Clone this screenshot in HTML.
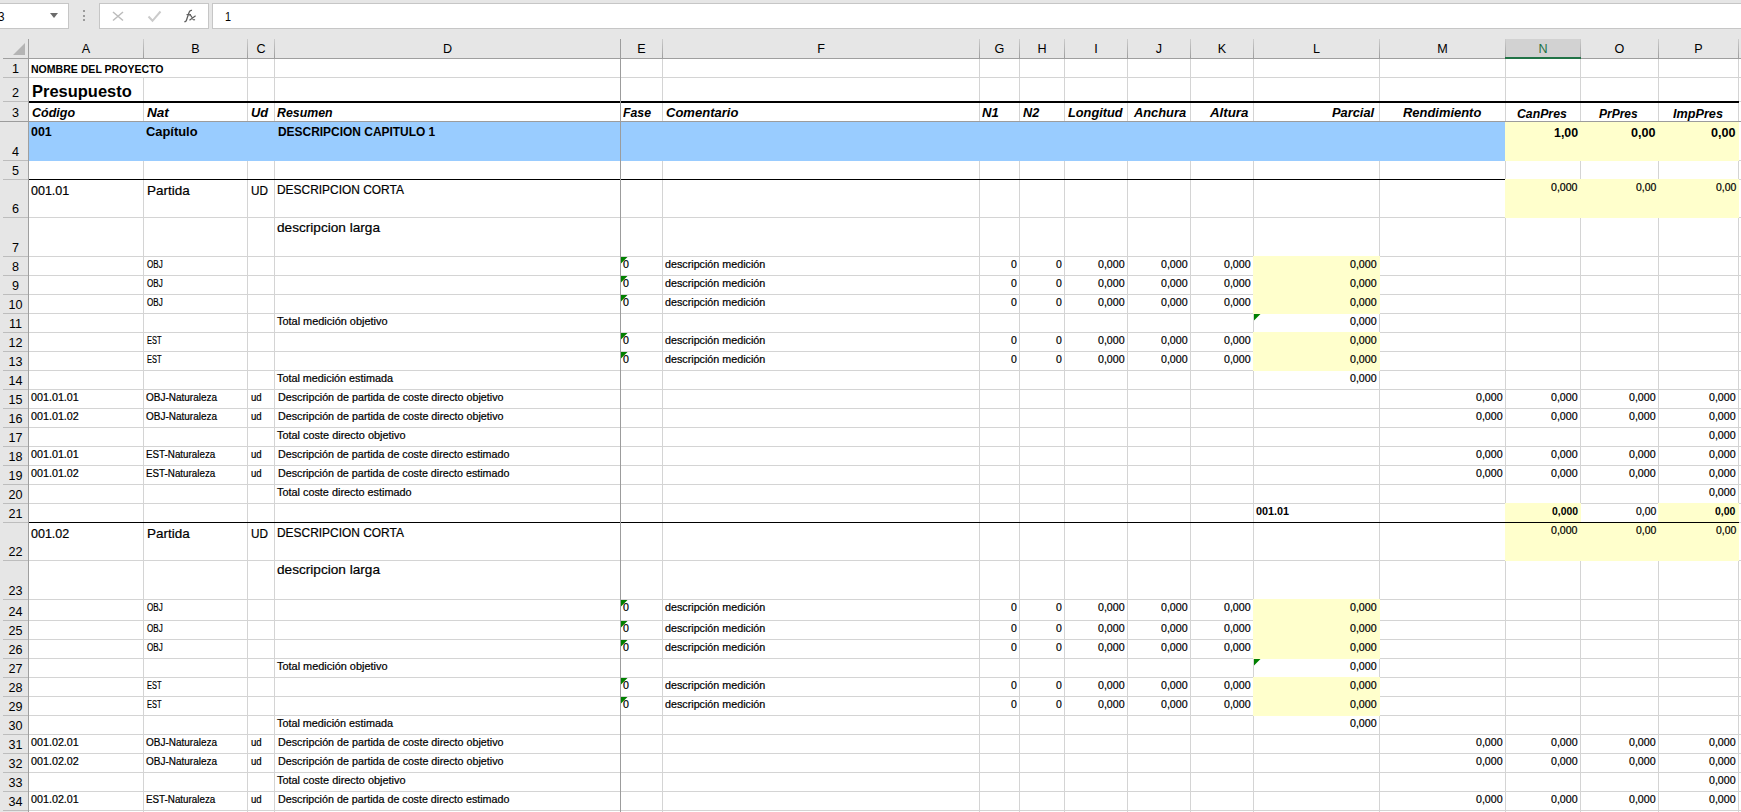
<!DOCTYPE html><html><head><meta charset="utf-8"><style>
html,body{margin:0;padding:0}
body{width:1741px;height:812px;overflow:hidden;position:relative;background:#fff;font-family:"Liberation Sans",sans-serif}
body>div,body>svg{position:absolute}
.t{white-space:nowrap;transform-origin:0 0}
.rg{-webkit-text-stroke:0.2px #000}
</style></head><body>
<div style="left:143px;top:59px;width:1px;height:753px;background:#d4d4d4;"></div>
<div style="left:247px;top:59px;width:1px;height:753px;background:#d4d4d4;"></div>
<div style="left:274px;top:59px;width:1px;height:753px;background:#d4d4d4;"></div>
<div style="left:620px;top:59px;width:1px;height:753px;background:#d4d4d4;"></div>
<div style="left:662px;top:59px;width:1px;height:753px;background:#d4d4d4;"></div>
<div style="left:979px;top:59px;width:1px;height:753px;background:#d4d4d4;"></div>
<div style="left:1019px;top:59px;width:1px;height:753px;background:#d4d4d4;"></div>
<div style="left:1064px;top:59px;width:1px;height:753px;background:#d4d4d4;"></div>
<div style="left:1127px;top:59px;width:1px;height:753px;background:#d4d4d4;"></div>
<div style="left:1190px;top:59px;width:1px;height:753px;background:#d4d4d4;"></div>
<div style="left:1253px;top:59px;width:1px;height:753px;background:#d4d4d4;"></div>
<div style="left:1379px;top:59px;width:1px;height:753px;background:#d4d4d4;"></div>
<div style="left:1505px;top:59px;width:1px;height:753px;background:#d4d4d4;"></div>
<div style="left:1580px;top:59px;width:1px;height:753px;background:#d4d4d4;"></div>
<div style="left:1658px;top:59px;width:1px;height:753px;background:#d4d4d4;"></div>
<div style="left:1738px;top:59px;width:1px;height:753px;background:#d4d4d4;"></div>
<div style="left:29px;top:77px;width:1712px;height:1px;background:#d4d4d4;"></div>
<div style="left:29px;top:101px;width:1712px;height:1px;background:#d4d4d4;"></div>
<div style="left:29px;top:121px;width:1712px;height:1px;background:#d4d4d4;"></div>
<div style="left:29px;top:160px;width:1712px;height:1px;background:#d4d4d4;"></div>
<div style="left:29px;top:179px;width:1712px;height:1px;background:#d4d4d4;"></div>
<div style="left:29px;top:217px;width:1712px;height:1px;background:#d4d4d4;"></div>
<div style="left:29px;top:256px;width:1712px;height:1px;background:#d4d4d4;"></div>
<div style="left:29px;top:275px;width:1712px;height:1px;background:#d4d4d4;"></div>
<div style="left:29px;top:294px;width:1712px;height:1px;background:#d4d4d4;"></div>
<div style="left:29px;top:313px;width:1712px;height:1px;background:#d4d4d4;"></div>
<div style="left:29px;top:332px;width:1712px;height:1px;background:#d4d4d4;"></div>
<div style="left:29px;top:351px;width:1712px;height:1px;background:#d4d4d4;"></div>
<div style="left:29px;top:370px;width:1712px;height:1px;background:#d4d4d4;"></div>
<div style="left:29px;top:389px;width:1712px;height:1px;background:#d4d4d4;"></div>
<div style="left:29px;top:408px;width:1712px;height:1px;background:#d4d4d4;"></div>
<div style="left:29px;top:427px;width:1712px;height:1px;background:#d4d4d4;"></div>
<div style="left:29px;top:446px;width:1712px;height:1px;background:#d4d4d4;"></div>
<div style="left:29px;top:465px;width:1712px;height:1px;background:#d4d4d4;"></div>
<div style="left:29px;top:484px;width:1712px;height:1px;background:#d4d4d4;"></div>
<div style="left:29px;top:503px;width:1712px;height:1px;background:#d4d4d4;"></div>
<div style="left:29px;top:522px;width:1712px;height:1px;background:#d4d4d4;"></div>
<div style="left:29px;top:560px;width:1712px;height:1px;background:#d4d4d4;"></div>
<div style="left:29px;top:599px;width:1712px;height:1px;background:#d4d4d4;"></div>
<div style="left:29px;top:620px;width:1712px;height:1px;background:#d4d4d4;"></div>
<div style="left:29px;top:639px;width:1712px;height:1px;background:#d4d4d4;"></div>
<div style="left:29px;top:658px;width:1712px;height:1px;background:#d4d4d4;"></div>
<div style="left:29px;top:677px;width:1712px;height:1px;background:#d4d4d4;"></div>
<div style="left:29px;top:696px;width:1712px;height:1px;background:#d4d4d4;"></div>
<div style="left:29px;top:715px;width:1712px;height:1px;background:#d4d4d4;"></div>
<div style="left:29px;top:734px;width:1712px;height:1px;background:#d4d4d4;"></div>
<div style="left:29px;top:753px;width:1712px;height:1px;background:#d4d4d4;"></div>
<div style="left:29px;top:772px;width:1712px;height:1px;background:#d4d4d4;"></div>
<div style="left:29px;top:791px;width:1712px;height:1px;background:#d4d4d4;"></div>
<div style="left:29px;top:810px;width:1712px;height:1px;background:#d4d4d4;"></div>
<div style="left:143px;top:59px;width:1px;height:18px;background:#fff;"></div>
<div style="left:29px;top:122px;width:1477px;height:39px;background:#99ccff;"></div>
<div style="left:1505px;top:122px;width:234px;height:39px;background:#ffffcc;"></div>
<div style="left:1505px;top:179px;width:234px;height:39px;background:#ffffcc;"></div>
<div style="left:1505px;top:522px;width:234px;height:39px;background:#ffffcc;"></div>
<div style="left:1253px;top:256px;width:127px;height:58px;background:#ffffcc;"></div>
<div style="left:1253px;top:332px;width:127px;height:39px;background:#ffffcc;"></div>
<div style="left:1253px;top:599px;width:127px;height:60px;background:#ffffcc;"></div>
<div style="left:1253px;top:677px;width:127px;height:39px;background:#ffffcc;"></div>
<div style="left:1505px;top:503px;width:76px;height:20px;background:#ffffcc;"></div>
<div style="left:1658px;top:503px;width:81px;height:20px;background:#ffffcc;"></div>
<div style="left:29px;top:101px;width:1710px;height:2px;background:#000;"></div>
<div style="left:29px;top:179px;width:1476px;height:1px;background:#000;"></div>
<div style="left:29px;top:522px;width:1710px;height:1px;background:#000;"></div>
<div style="left:0px;top:0px;width:1741px;height:39px;background:#e6e6e6;"></div>
<div style="left:-2px;top:3px;width:71px;height:26px;background:#fff;box-sizing:border-box;border:1px solid #c6c6c6;"></div>
<div style="left:99px;top:3px;width:110px;height:26px;background:#fff;box-sizing:border-box;border:1px solid #c6c6c6;"></div>
<div style="left:212px;top:3px;width:1531px;height:26px;background:#fff;box-sizing:border-box;border:1px solid #c6c6c6;"></div>
<div style="left:83px;top:10px;width:2px;height:2px;background:#9b9b9b;"></div>
<div style="left:83px;top:15px;width:2px;height:2px;background:#9b9b9b;"></div>
<div style="left:83px;top:19px;width:2px;height:2px;background:#9b9b9b;"></div>
<svg style="left:50px;top:13px" width="8" height="5"><path d="M0 0H8L4 5Z" fill="#6b6b6b"/></svg>
<svg style="left:105px;top:5px" width="100" height="22" viewBox="105 5 100 22"><path d="M113 12L123 20.5M123 12L113 20.5" stroke="#bcbcbc" stroke-width="1.5" fill="none"/><path d="M148.5 16.5L152.5 20.8L160.5 11.5" stroke="#cbcbcb" stroke-width="2" fill="none"/><path d="M184.3 21.6C185.5 22 186.3 21 186.7 19.5L189 12.5C189.5 10.8 190.5 10 192 10.4" stroke="#5f5f5f" stroke-width="1.3" fill="none"/><path d="M186.5 14.6H191" stroke="#5f5f5f" stroke-width="1.1"/><path d="M189.5 15.8C190.5 15.3 191.3 15.6 191.8 17L193 19.3C193.4 20 194.2 20.1 195 19.6M195.6 15.8L189.5 20.2" stroke="#5f5f5f" stroke-width="1.2" fill="none"/></svg>
<div style="left:0px;top:39px;width:1741px;height:20px;background:#e6e6e6;"></div>
<div style="left:3px;top:58px;width:1738px;height:1px;background:#9f9f9f;"></div>
<div style="left:1505px;top:39px;width:76px;height:18px;background:#d2d2d2;"></div>
<div style="left:143px;top:39px;width:1px;height:19px;background:#b1b1b1;background:linear-gradient(#cccccc,#9e9e9e);"></div>
<div style="left:247px;top:39px;width:1px;height:19px;background:#b1b1b1;background:linear-gradient(#cccccc,#9e9e9e);"></div>
<div style="left:274px;top:39px;width:1px;height:19px;background:#b1b1b1;background:linear-gradient(#cccccc,#9e9e9e);"></div>
<div style="left:662px;top:39px;width:1px;height:19px;background:#b1b1b1;background:linear-gradient(#cccccc,#9e9e9e);"></div>
<div style="left:979px;top:39px;width:1px;height:19px;background:#b1b1b1;background:linear-gradient(#cccccc,#9e9e9e);"></div>
<div style="left:1019px;top:39px;width:1px;height:19px;background:#b1b1b1;background:linear-gradient(#cccccc,#9e9e9e);"></div>
<div style="left:1064px;top:39px;width:1px;height:19px;background:#b1b1b1;background:linear-gradient(#cccccc,#9e9e9e);"></div>
<div style="left:1127px;top:39px;width:1px;height:19px;background:#b1b1b1;background:linear-gradient(#cccccc,#9e9e9e);"></div>
<div style="left:1190px;top:39px;width:1px;height:19px;background:#b1b1b1;background:linear-gradient(#cccccc,#9e9e9e);"></div>
<div style="left:1253px;top:39px;width:1px;height:19px;background:#b1b1b1;background:linear-gradient(#cccccc,#9e9e9e);"></div>
<div style="left:1379px;top:39px;width:1px;height:19px;background:#b1b1b1;background:linear-gradient(#cccccc,#9e9e9e);"></div>
<div style="left:1505px;top:39px;width:1px;height:19px;background:#b1b1b1;background:linear-gradient(#cccccc,#9e9e9e);"></div>
<div style="left:1580px;top:39px;width:1px;height:19px;background:#b1b1b1;background:linear-gradient(#cccccc,#9e9e9e);"></div>
<div style="left:1658px;top:39px;width:1px;height:19px;background:#b1b1b1;background:linear-gradient(#cccccc,#9e9e9e);"></div>
<div style="left:1738px;top:39px;width:1px;height:19px;background:#b1b1b1;background:linear-gradient(#cccccc,#9e9e9e);"></div>
<div style="left:1505px;top:57px;width:76px;height:2px;background:#217346;"></div>
<svg style="left:13px;top:43px" width="12" height="12"><path d="M0 12L12 0V12Z" fill="#b4b4b4"/></svg>
<div style="left:0px;top:59px;width:28px;height:753px;background:#e6e6e6;"></div>
<div style="left:28px;top:39px;width:1px;height:773px;background:#9f9f9f;"></div>
<div style="left:3px;top:77px;width:25px;height:1px;background:#bdbdbd;"></div>
<div style="left:3px;top:101px;width:25px;height:1px;background:#bdbdbd;"></div>
<div style="left:3px;top:160px;width:25px;height:1px;background:#bdbdbd;"></div>
<div style="left:3px;top:179px;width:25px;height:1px;background:#bdbdbd;"></div>
<div style="left:3px;top:217px;width:25px;height:1px;background:#bdbdbd;"></div>
<div style="left:3px;top:256px;width:25px;height:1px;background:#bdbdbd;"></div>
<div style="left:3px;top:275px;width:25px;height:1px;background:#bdbdbd;"></div>
<div style="left:3px;top:294px;width:25px;height:1px;background:#bdbdbd;"></div>
<div style="left:3px;top:313px;width:25px;height:1px;background:#bdbdbd;"></div>
<div style="left:3px;top:332px;width:25px;height:1px;background:#bdbdbd;"></div>
<div style="left:3px;top:351px;width:25px;height:1px;background:#bdbdbd;"></div>
<div style="left:3px;top:370px;width:25px;height:1px;background:#bdbdbd;"></div>
<div style="left:3px;top:389px;width:25px;height:1px;background:#bdbdbd;"></div>
<div style="left:3px;top:408px;width:25px;height:1px;background:#bdbdbd;"></div>
<div style="left:3px;top:427px;width:25px;height:1px;background:#bdbdbd;"></div>
<div style="left:3px;top:446px;width:25px;height:1px;background:#bdbdbd;"></div>
<div style="left:3px;top:465px;width:25px;height:1px;background:#bdbdbd;"></div>
<div style="left:3px;top:484px;width:25px;height:1px;background:#bdbdbd;"></div>
<div style="left:3px;top:503px;width:25px;height:1px;background:#bdbdbd;"></div>
<div style="left:3px;top:522px;width:25px;height:1px;background:#bdbdbd;"></div>
<div style="left:3px;top:560px;width:25px;height:1px;background:#bdbdbd;"></div>
<div style="left:3px;top:599px;width:25px;height:1px;background:#bdbdbd;"></div>
<div style="left:3px;top:620px;width:25px;height:1px;background:#bdbdbd;"></div>
<div style="left:3px;top:639px;width:25px;height:1px;background:#bdbdbd;"></div>
<div style="left:3px;top:658px;width:25px;height:1px;background:#bdbdbd;"></div>
<div style="left:3px;top:677px;width:25px;height:1px;background:#bdbdbd;"></div>
<div style="left:3px;top:696px;width:25px;height:1px;background:#bdbdbd;"></div>
<div style="left:3px;top:715px;width:25px;height:1px;background:#bdbdbd;"></div>
<div style="left:3px;top:734px;width:25px;height:1px;background:#bdbdbd;"></div>
<div style="left:3px;top:753px;width:25px;height:1px;background:#bdbdbd;"></div>
<div style="left:3px;top:772px;width:25px;height:1px;background:#bdbdbd;"></div>
<div style="left:3px;top:791px;width:25px;height:1px;background:#bdbdbd;"></div>
<div style="left:3px;top:810px;width:25px;height:1px;background:#bdbdbd;"></div>
<div style="left:0px;top:121px;width:1741px;height:1px;background:#9c9c9c;"></div>
<div style="left:620px;top:39px;width:1px;height:773px;background:#9c9c9c;"></div>
<div class="t" style="left:30.90px;top:63.00px;font-size:10.9px;line-height:13px;font-weight:bold;font-style:normal;color:#000;transform:scaleX(0.9674)">NOMBRE DEL PROYECTO</div>
<div class="t" style="left:31.80px;top:82.00px;font-size:15.9px;line-height:19px;font-weight:bold;font-style:normal;color:#000;transform:scaleX(1.0366)">Presupuesto</div>
<div class="t" style="left:31.70px;top:106.00px;font-size:12.0px;line-height:14px;font-weight:bold;font-style:italic;color:#000;transform:scaleX(1.0426)">Código</div>
<div class="t" style="left:146.50px;top:106.00px;font-size:12.0px;line-height:14px;font-weight:bold;font-style:italic;color:#000;transform:scaleX(1.1313)">Nat</div>
<div class="t" style="left:250.60px;top:106.00px;font-size:12.0px;line-height:14px;font-weight:bold;font-style:italic;color:#000;transform:scaleX(1.0741)">Ud</div>
<div class="t" style="left:277.20px;top:106.00px;font-size:12.0px;line-height:14px;font-weight:bold;font-style:italic;color:#000;transform:scaleX(1.0296)">Resumen</div>
<div class="t" style="left:623.00px;top:106.00px;font-size:12.0px;line-height:14px;font-weight:bold;font-style:italic;color:#000;transform:scaleX(1.0234)">Fase</div>
<div class="t" style="left:665.50px;top:106.00px;font-size:12.0px;line-height:14px;font-weight:bold;font-style:italic;color:#000;transform:scaleX(1.0861)">Comentario</div>
<div class="t" style="left:982.40px;top:106.00px;font-size:12.0px;line-height:14px;font-weight:bold;font-style:italic;color:#000;transform:scaleX(1.0938)">N1</div>
<div class="t" style="left:1022.50px;top:106.00px;font-size:12.0px;line-height:14px;font-weight:bold;font-style:italic;color:#000;transform:scaleX(1.0612)">N2</div>
<div class="t" style="left:1068.30px;top:106.00px;font-size:12.0px;line-height:14px;font-weight:bold;font-style:italic;color:#000;transform:scaleX(1.0633)">Longitud</div>
<div class="t" style="left:1134.12px;top:106.00px;font-size:12.0px;line-height:14px;font-weight:bold;font-style:italic;color:#000;transform:scaleX(1.0703)">Anchura</div>
<div class="t" style="left:1210.23px;top:106.00px;font-size:12.0px;line-height:14px;font-weight:bold;font-style:italic;color:#000;transform:scaleX(1.1092)">Altura</div>
<div class="t" style="left:1332.40px;top:106.00px;font-size:12.0px;line-height:14px;font-weight:bold;font-style:italic;color:#000;transform:scaleX(1.0707)">Parcial</div>
<div class="t" style="left:1402.60px;top:106.00px;font-size:12.0px;line-height:14px;font-weight:bold;font-style:italic;color:#000;transform:scaleX(1.0776)">Rendimiento</div>
<div class="t" style="left:1517.30px;top:107.00px;font-size:12.0px;line-height:14px;font-weight:bold;font-style:italic;color:#000;transform:scaleX(1.0222)">CanPres</div>
<div class="t" style="left:1599.00px;top:107.00px;font-size:12.0px;line-height:14px;font-weight:bold;font-style:italic;color:#000;transform:scaleX(1.0000)">PrPres</div>
<div class="t" style="left:1673.00px;top:107.00px;font-size:12.0px;line-height:14px;font-weight:bold;font-style:italic;color:#000;transform:scaleX(1.0541)">ImpPres</div>
<div class="t" style="left:31.00px;top:125.00px;font-size:12.4px;line-height:15px;font-weight:bold;font-style:normal;color:#000;transform:scaleX(1.0044)">001</div>
<div class="t" style="left:146.00px;top:125.00px;font-size:12.4px;line-height:15px;font-weight:bold;font-style:normal;color:#000;transform:scaleX(1.0403)">Capítulo</div>
<div class="t" style="left:277.50px;top:125.00px;font-size:12.4px;line-height:15px;font-weight:bold;font-style:normal;color:#000;transform:scaleX(0.9638)">DESCRIPCION CAPITULO 1</div>
<div class="t" style="left:1553.60px;top:126.00px;font-size:12.4px;line-height:15px;font-weight:bold;font-style:normal;color:#000;transform:scaleX(0.9993)">1,00</div>
<div class="t" style="left:1631.30px;top:126.00px;font-size:12.4px;line-height:15px;font-weight:bold;font-style:normal;color:#000;transform:scaleX(1.0158)">0,00</div>
<div class="t" style="left:1711.40px;top:126.00px;font-size:12.4px;line-height:15px;font-weight:bold;font-style:normal;color:#000;transform:scaleX(1.0158)">0,00</div>
<div class="t rg" style="left:31.30px;top:184.00px;font-size:12.6px;line-height:15px;font-weight:normal;font-style:normal;color:#000;transform:scaleX(0.9934)">001.01</div>
<div class="t rg" style="left:146.80px;top:184.00px;font-size:12.6px;line-height:15px;font-weight:normal;font-style:normal;color:#000;transform:scaleX(1.0691)">Partida</div>
<div class="t rg" style="left:250.60px;top:184.00px;font-size:12.6px;line-height:15px;font-weight:normal;font-style:normal;color:#000;transform:scaleX(0.9337)">UD</div>
<div class="t rg" style="left:277.30px;top:183.00px;font-size:12.6px;line-height:15px;font-weight:normal;font-style:normal;color:#000;transform:scaleX(0.9478)">DESCRIPCION CORTA</div>
<div class="t rg" style="left:1551.20px;top:182.00px;font-size:10.0px;line-height:12px;font-weight:normal;font-style:normal;color:#000;transform:scaleX(1.0579)">0,000</div>
<div class="t rg" style="left:1635.60px;top:182.00px;font-size:10.0px;line-height:12px;font-weight:normal;font-style:normal;color:#000;transform:scaleX(1.0386)">0,00</div>
<div class="t rg" style="left:1715.60px;top:182.00px;font-size:10.0px;line-height:12px;font-weight:normal;font-style:normal;color:#000;transform:scaleX(1.0386)">0,00</div>
<div class="t rg" style="left:277.30px;top:221.00px;font-size:12.6px;line-height:15px;font-weight:normal;font-style:normal;color:#000;transform:scaleX(1.0816)">descripcion larga</div>
<div class="t rg" style="left:146.50px;top:259.00px;font-size:10.0px;line-height:12px;font-weight:normal;font-style:normal;color:#000;transform:scaleX(0.8072)">OBJ</div>
<div class="t rg" style="left:623.10px;top:259.00px;font-size:10.0px;line-height:12px;font-weight:normal;font-style:normal;color:#000;transform:scaleX(1.0631)">0</div>
<div class="t rg" style="left:665.40px;top:259.00px;font-size:10.0px;line-height:12px;font-weight:normal;font-style:normal;color:#000;transform:scaleX(1.0739)">descripción medición</div>
<div class="t rg" style="left:1011.00px;top:259.00px;font-size:10.0px;line-height:12px;font-weight:normal;font-style:normal;color:#000;transform:scaleX(1.0450)">0</div>
<div class="t rg" style="left:1055.90px;top:259.00px;font-size:10.0px;line-height:12px;font-weight:normal;font-style:normal;color:#000;transform:scaleX(1.0450)">0</div>
<div class="t rg" style="left:1098.00px;top:259.00px;font-size:10.0px;line-height:12px;font-weight:normal;font-style:normal;color:#000;transform:scaleX(1.0619)">0,000</div>
<div class="t rg" style="left:1161.00px;top:259.00px;font-size:10.0px;line-height:12px;font-weight:normal;font-style:normal;color:#000;transform:scaleX(1.0619)">0,000</div>
<div class="t rg" style="left:1224.00px;top:259.00px;font-size:10.0px;line-height:12px;font-weight:normal;font-style:normal;color:#000;transform:scaleX(1.0619)">0,000</div>
<div class="t rg" style="left:1350.20px;top:259.00px;font-size:10.0px;line-height:12px;font-weight:normal;font-style:normal;color:#000;transform:scaleX(1.0619)">0,000</div>
<svg style="left:621px;top:257px" width="7" height="7"><path d="M0 0H6.5L0 6.5Z" fill="#008000"/></svg>
<div class="t rg" style="left:146.50px;top:278.00px;font-size:10.0px;line-height:12px;font-weight:normal;font-style:normal;color:#000;transform:scaleX(0.8072)">OBJ</div>
<div class="t rg" style="left:623.10px;top:278.00px;font-size:10.0px;line-height:12px;font-weight:normal;font-style:normal;color:#000;transform:scaleX(1.0631)">0</div>
<div class="t rg" style="left:665.40px;top:278.00px;font-size:10.0px;line-height:12px;font-weight:normal;font-style:normal;color:#000;transform:scaleX(1.0739)">descripción medición</div>
<div class="t rg" style="left:1011.00px;top:278.00px;font-size:10.0px;line-height:12px;font-weight:normal;font-style:normal;color:#000;transform:scaleX(1.0450)">0</div>
<div class="t rg" style="left:1055.90px;top:278.00px;font-size:10.0px;line-height:12px;font-weight:normal;font-style:normal;color:#000;transform:scaleX(1.0450)">0</div>
<div class="t rg" style="left:1098.00px;top:278.00px;font-size:10.0px;line-height:12px;font-weight:normal;font-style:normal;color:#000;transform:scaleX(1.0619)">0,000</div>
<div class="t rg" style="left:1161.00px;top:278.00px;font-size:10.0px;line-height:12px;font-weight:normal;font-style:normal;color:#000;transform:scaleX(1.0619)">0,000</div>
<div class="t rg" style="left:1224.00px;top:278.00px;font-size:10.0px;line-height:12px;font-weight:normal;font-style:normal;color:#000;transform:scaleX(1.0619)">0,000</div>
<div class="t rg" style="left:1350.20px;top:278.00px;font-size:10.0px;line-height:12px;font-weight:normal;font-style:normal;color:#000;transform:scaleX(1.0619)">0,000</div>
<svg style="left:621px;top:276px" width="7" height="7"><path d="M0 0H6.5L0 6.5Z" fill="#008000"/></svg>
<div class="t rg" style="left:146.50px;top:297.00px;font-size:10.0px;line-height:12px;font-weight:normal;font-style:normal;color:#000;transform:scaleX(0.8072)">OBJ</div>
<div class="t rg" style="left:623.10px;top:297.00px;font-size:10.0px;line-height:12px;font-weight:normal;font-style:normal;color:#000;transform:scaleX(1.0631)">0</div>
<div class="t rg" style="left:665.40px;top:297.00px;font-size:10.0px;line-height:12px;font-weight:normal;font-style:normal;color:#000;transform:scaleX(1.0739)">descripción medición</div>
<div class="t rg" style="left:1011.00px;top:297.00px;font-size:10.0px;line-height:12px;font-weight:normal;font-style:normal;color:#000;transform:scaleX(1.0450)">0</div>
<div class="t rg" style="left:1055.90px;top:297.00px;font-size:10.0px;line-height:12px;font-weight:normal;font-style:normal;color:#000;transform:scaleX(1.0450)">0</div>
<div class="t rg" style="left:1098.00px;top:297.00px;font-size:10.0px;line-height:12px;font-weight:normal;font-style:normal;color:#000;transform:scaleX(1.0619)">0,000</div>
<div class="t rg" style="left:1161.00px;top:297.00px;font-size:10.0px;line-height:12px;font-weight:normal;font-style:normal;color:#000;transform:scaleX(1.0619)">0,000</div>
<div class="t rg" style="left:1224.00px;top:297.00px;font-size:10.0px;line-height:12px;font-weight:normal;font-style:normal;color:#000;transform:scaleX(1.0619)">0,000</div>
<div class="t rg" style="left:1350.20px;top:297.00px;font-size:10.0px;line-height:12px;font-weight:normal;font-style:normal;color:#000;transform:scaleX(1.0619)">0,000</div>
<svg style="left:621px;top:295px" width="7" height="7"><path d="M0 0H6.5L0 6.5Z" fill="#008000"/></svg>
<div class="t rg" style="left:277.40px;top:316.00px;font-size:10.0px;line-height:12px;font-weight:normal;font-style:normal;color:#000;transform:scaleX(1.0924)">Total medición objetivo</div>
<div class="t rg" style="left:1350.20px;top:316.00px;font-size:10.0px;line-height:12px;font-weight:normal;font-style:normal;color:#000;transform:scaleX(1.0619)">0,000</div>
<svg style="left:1254px;top:314px" width="7" height="7"><path d="M0 0H6.5L0 6.5Z" fill="#008000"/></svg>
<div class="t rg" style="left:146.50px;top:335.00px;font-size:10.0px;line-height:12px;font-weight:normal;font-style:normal;color:#000;transform:scaleX(0.7404)">EST</div>
<div class="t rg" style="left:623.10px;top:335.00px;font-size:10.0px;line-height:12px;font-weight:normal;font-style:normal;color:#000;transform:scaleX(1.0631)">0</div>
<div class="t rg" style="left:665.40px;top:335.00px;font-size:10.0px;line-height:12px;font-weight:normal;font-style:normal;color:#000;transform:scaleX(1.0739)">descripción medición</div>
<div class="t rg" style="left:1011.00px;top:335.00px;font-size:10.0px;line-height:12px;font-weight:normal;font-style:normal;color:#000;transform:scaleX(1.0450)">0</div>
<div class="t rg" style="left:1055.90px;top:335.00px;font-size:10.0px;line-height:12px;font-weight:normal;font-style:normal;color:#000;transform:scaleX(1.0450)">0</div>
<div class="t rg" style="left:1098.00px;top:335.00px;font-size:10.0px;line-height:12px;font-weight:normal;font-style:normal;color:#000;transform:scaleX(1.0619)">0,000</div>
<div class="t rg" style="left:1161.00px;top:335.00px;font-size:10.0px;line-height:12px;font-weight:normal;font-style:normal;color:#000;transform:scaleX(1.0619)">0,000</div>
<div class="t rg" style="left:1224.00px;top:335.00px;font-size:10.0px;line-height:12px;font-weight:normal;font-style:normal;color:#000;transform:scaleX(1.0619)">0,000</div>
<div class="t rg" style="left:1350.20px;top:335.00px;font-size:10.0px;line-height:12px;font-weight:normal;font-style:normal;color:#000;transform:scaleX(1.0619)">0,000</div>
<svg style="left:621px;top:333px" width="7" height="7"><path d="M0 0H6.5L0 6.5Z" fill="#008000"/></svg>
<div class="t rg" style="left:146.50px;top:354.00px;font-size:10.0px;line-height:12px;font-weight:normal;font-style:normal;color:#000;transform:scaleX(0.7404)">EST</div>
<div class="t rg" style="left:623.10px;top:354.00px;font-size:10.0px;line-height:12px;font-weight:normal;font-style:normal;color:#000;transform:scaleX(1.0631)">0</div>
<div class="t rg" style="left:665.40px;top:354.00px;font-size:10.0px;line-height:12px;font-weight:normal;font-style:normal;color:#000;transform:scaleX(1.0739)">descripción medición</div>
<div class="t rg" style="left:1011.00px;top:354.00px;font-size:10.0px;line-height:12px;font-weight:normal;font-style:normal;color:#000;transform:scaleX(1.0450)">0</div>
<div class="t rg" style="left:1055.90px;top:354.00px;font-size:10.0px;line-height:12px;font-weight:normal;font-style:normal;color:#000;transform:scaleX(1.0450)">0</div>
<div class="t rg" style="left:1098.00px;top:354.00px;font-size:10.0px;line-height:12px;font-weight:normal;font-style:normal;color:#000;transform:scaleX(1.0619)">0,000</div>
<div class="t rg" style="left:1161.00px;top:354.00px;font-size:10.0px;line-height:12px;font-weight:normal;font-style:normal;color:#000;transform:scaleX(1.0619)">0,000</div>
<div class="t rg" style="left:1224.00px;top:354.00px;font-size:10.0px;line-height:12px;font-weight:normal;font-style:normal;color:#000;transform:scaleX(1.0619)">0,000</div>
<div class="t rg" style="left:1350.20px;top:354.00px;font-size:10.0px;line-height:12px;font-weight:normal;font-style:normal;color:#000;transform:scaleX(1.0619)">0,000</div>
<svg style="left:621px;top:352px" width="7" height="7"><path d="M0 0H6.5L0 6.5Z" fill="#008000"/></svg>
<div class="t rg" style="left:277.40px;top:373.00px;font-size:10.0px;line-height:12px;font-weight:normal;font-style:normal;color:#000;transform:scaleX(1.0811)">Total medición estimada</div>
<div class="t rg" style="left:1350.20px;top:373.00px;font-size:10.0px;line-height:12px;font-weight:normal;font-style:normal;color:#000;transform:scaleX(1.0619)">0,000</div>
<div class="t rg" style="left:31.00px;top:392.00px;font-size:10.0px;line-height:12px;font-weight:normal;font-style:normal;color:#000;transform:scaleX(1.0742)">001.01.01</div>
<div class="t rg" style="left:146.30px;top:392.00px;font-size:10.0px;line-height:12px;font-weight:normal;font-style:normal;color:#000;transform:scaleX(0.9986)">OBJ-Naturaleza</div>
<div class="t rg" style="left:250.60px;top:392.00px;font-size:10.0px;line-height:12px;font-weight:normal;font-style:normal;color:#000;transform:scaleX(0.9640)">ud</div>
<div class="t rg" style="left:277.50px;top:392.00px;font-size:10.0px;line-height:12px;font-weight:normal;font-style:normal;color:#000;transform:scaleX(1.0733)">Descripción de partida de coste directo objetivo</div>
<div class="t rg" style="left:1476.00px;top:392.00px;font-size:10.0px;line-height:12px;font-weight:normal;font-style:normal;color:#000;transform:scaleX(1.0619)">0,000</div>
<div class="t rg" style="left:1551.20px;top:392.00px;font-size:10.0px;line-height:12px;font-weight:normal;font-style:normal;color:#000;transform:scaleX(1.0619)">0,000</div>
<div class="t rg" style="left:1629.20px;top:392.00px;font-size:10.0px;line-height:12px;font-weight:normal;font-style:normal;color:#000;transform:scaleX(1.0619)">0,000</div>
<div class="t rg" style="left:1709.00px;top:392.00px;font-size:10.0px;line-height:12px;font-weight:normal;font-style:normal;color:#000;transform:scaleX(1.0619)">0,000</div>
<div class="t rg" style="left:31.00px;top:411.00px;font-size:10.0px;line-height:12px;font-weight:normal;font-style:normal;color:#000;transform:scaleX(1.0742)">001.01.02</div>
<div class="t rg" style="left:146.30px;top:411.00px;font-size:10.0px;line-height:12px;font-weight:normal;font-style:normal;color:#000;transform:scaleX(0.9986)">OBJ-Naturaleza</div>
<div class="t rg" style="left:250.60px;top:411.00px;font-size:10.0px;line-height:12px;font-weight:normal;font-style:normal;color:#000;transform:scaleX(0.9640)">ud</div>
<div class="t rg" style="left:277.50px;top:411.00px;font-size:10.0px;line-height:12px;font-weight:normal;font-style:normal;color:#000;transform:scaleX(1.0733)">Descripción de partida de coste directo objetivo</div>
<div class="t rg" style="left:1476.00px;top:411.00px;font-size:10.0px;line-height:12px;font-weight:normal;font-style:normal;color:#000;transform:scaleX(1.0619)">0,000</div>
<div class="t rg" style="left:1551.20px;top:411.00px;font-size:10.0px;line-height:12px;font-weight:normal;font-style:normal;color:#000;transform:scaleX(1.0619)">0,000</div>
<div class="t rg" style="left:1629.20px;top:411.00px;font-size:10.0px;line-height:12px;font-weight:normal;font-style:normal;color:#000;transform:scaleX(1.0619)">0,000</div>
<div class="t rg" style="left:1709.00px;top:411.00px;font-size:10.0px;line-height:12px;font-weight:normal;font-style:normal;color:#000;transform:scaleX(1.0619)">0,000</div>
<div class="t rg" style="left:31.00px;top:449.00px;font-size:10.0px;line-height:12px;font-weight:normal;font-style:normal;color:#000;transform:scaleX(1.0742)">001.01.01</div>
<div class="t rg" style="left:146.30px;top:449.00px;font-size:10.0px;line-height:12px;font-weight:normal;font-style:normal;color:#000;transform:scaleX(0.9809)">EST-Naturaleza</div>
<div class="t rg" style="left:250.60px;top:449.00px;font-size:10.0px;line-height:12px;font-weight:normal;font-style:normal;color:#000;transform:scaleX(0.9640)">ud</div>
<div class="t rg" style="left:277.50px;top:449.00px;font-size:10.0px;line-height:12px;font-weight:normal;font-style:normal;color:#000;transform:scaleX(1.0701)">Descripción de partida de coste directo estimado</div>
<div class="t rg" style="left:1476.00px;top:449.00px;font-size:10.0px;line-height:12px;font-weight:normal;font-style:normal;color:#000;transform:scaleX(1.0619)">0,000</div>
<div class="t rg" style="left:1551.20px;top:449.00px;font-size:10.0px;line-height:12px;font-weight:normal;font-style:normal;color:#000;transform:scaleX(1.0619)">0,000</div>
<div class="t rg" style="left:1629.20px;top:449.00px;font-size:10.0px;line-height:12px;font-weight:normal;font-style:normal;color:#000;transform:scaleX(1.0619)">0,000</div>
<div class="t rg" style="left:1709.00px;top:449.00px;font-size:10.0px;line-height:12px;font-weight:normal;font-style:normal;color:#000;transform:scaleX(1.0619)">0,000</div>
<div class="t rg" style="left:31.00px;top:468.00px;font-size:10.0px;line-height:12px;font-weight:normal;font-style:normal;color:#000;transform:scaleX(1.0742)">001.01.02</div>
<div class="t rg" style="left:146.30px;top:468.00px;font-size:10.0px;line-height:12px;font-weight:normal;font-style:normal;color:#000;transform:scaleX(0.9809)">EST-Naturaleza</div>
<div class="t rg" style="left:250.60px;top:468.00px;font-size:10.0px;line-height:12px;font-weight:normal;font-style:normal;color:#000;transform:scaleX(0.9640)">ud</div>
<div class="t rg" style="left:277.50px;top:468.00px;font-size:10.0px;line-height:12px;font-weight:normal;font-style:normal;color:#000;transform:scaleX(1.0701)">Descripción de partida de coste directo estimado</div>
<div class="t rg" style="left:1476.00px;top:468.00px;font-size:10.0px;line-height:12px;font-weight:normal;font-style:normal;color:#000;transform:scaleX(1.0619)">0,000</div>
<div class="t rg" style="left:1551.20px;top:468.00px;font-size:10.0px;line-height:12px;font-weight:normal;font-style:normal;color:#000;transform:scaleX(1.0619)">0,000</div>
<div class="t rg" style="left:1629.20px;top:468.00px;font-size:10.0px;line-height:12px;font-weight:normal;font-style:normal;color:#000;transform:scaleX(1.0619)">0,000</div>
<div class="t rg" style="left:1709.00px;top:468.00px;font-size:10.0px;line-height:12px;font-weight:normal;font-style:normal;color:#000;transform:scaleX(1.0619)">0,000</div>
<div class="t rg" style="left:277.30px;top:430.00px;font-size:10.0px;line-height:12px;font-weight:normal;font-style:normal;color:#000;transform:scaleX(1.0904)">Total coste directo objetivo</div>
<div class="t rg" style="left:1709.00px;top:430.00px;font-size:10.0px;line-height:12px;font-weight:normal;font-style:normal;color:#000;transform:scaleX(1.0619)">0,000</div>
<div class="t rg" style="left:277.30px;top:487.00px;font-size:10.0px;line-height:12px;font-weight:normal;font-style:normal;color:#000;transform:scaleX(1.0859)">Total coste directo estimado</div>
<div class="t rg" style="left:1709.00px;top:487.00px;font-size:10.0px;line-height:12px;font-weight:normal;font-style:normal;color:#000;transform:scaleX(1.0619)">0,000</div>
<div class="t" style="left:1255.80px;top:506.00px;font-size:10.0px;line-height:12px;font-weight:bold;font-style:normal;color:#000;transform:scaleX(1.0817)">001.01</div>
<div class="t" style="left:1551.70px;top:506.00px;font-size:10.0px;line-height:12px;font-weight:bold;font-style:normal;color:#000;transform:scaleX(1.0379)">0,000</div>
<div class="t rg" style="left:1635.60px;top:506.00px;font-size:10.0px;line-height:12px;font-weight:normal;font-style:normal;color:#000;transform:scaleX(1.0386)">0,00</div>
<div class="t" style="left:1715.40px;top:506.00px;font-size:10.0px;line-height:12px;font-weight:bold;font-style:normal;color:#000;transform:scaleX(1.0488)">0,00</div>
<div class="t rg" style="left:31.30px;top:527.00px;font-size:12.6px;line-height:15px;font-weight:normal;font-style:normal;color:#000;transform:scaleX(0.9934)">001.02</div>
<div class="t rg" style="left:146.80px;top:527.00px;font-size:12.6px;line-height:15px;font-weight:normal;font-style:normal;color:#000;transform:scaleX(1.0691)">Partida</div>
<div class="t rg" style="left:250.60px;top:527.00px;font-size:12.6px;line-height:15px;font-weight:normal;font-style:normal;color:#000;transform:scaleX(0.9337)">UD</div>
<div class="t rg" style="left:277.30px;top:526.00px;font-size:12.6px;line-height:15px;font-weight:normal;font-style:normal;color:#000;transform:scaleX(0.9478)">DESCRIPCION CORTA</div>
<div class="t rg" style="left:1551.20px;top:525.00px;font-size:10.0px;line-height:12px;font-weight:normal;font-style:normal;color:#000;transform:scaleX(1.0579)">0,000</div>
<div class="t rg" style="left:1635.60px;top:525.00px;font-size:10.0px;line-height:12px;font-weight:normal;font-style:normal;color:#000;transform:scaleX(1.0386)">0,00</div>
<div class="t rg" style="left:1715.60px;top:525.00px;font-size:10.0px;line-height:12px;font-weight:normal;font-style:normal;color:#000;transform:scaleX(1.0386)">0,00</div>
<div class="t rg" style="left:277.30px;top:563.00px;font-size:12.6px;line-height:15px;font-weight:normal;font-style:normal;color:#000;transform:scaleX(1.0816)">descripcion larga</div>
<div class="t rg" style="left:146.50px;top:602.00px;font-size:10.0px;line-height:12px;font-weight:normal;font-style:normal;color:#000;transform:scaleX(0.8072)">OBJ</div>
<div class="t rg" style="left:623.10px;top:602.00px;font-size:10.0px;line-height:12px;font-weight:normal;font-style:normal;color:#000;transform:scaleX(1.0631)">0</div>
<div class="t rg" style="left:665.40px;top:602.00px;font-size:10.0px;line-height:12px;font-weight:normal;font-style:normal;color:#000;transform:scaleX(1.0739)">descripción medición</div>
<div class="t rg" style="left:1011.00px;top:602.00px;font-size:10.0px;line-height:12px;font-weight:normal;font-style:normal;color:#000;transform:scaleX(1.0450)">0</div>
<div class="t rg" style="left:1055.90px;top:602.00px;font-size:10.0px;line-height:12px;font-weight:normal;font-style:normal;color:#000;transform:scaleX(1.0450)">0</div>
<div class="t rg" style="left:1098.00px;top:602.00px;font-size:10.0px;line-height:12px;font-weight:normal;font-style:normal;color:#000;transform:scaleX(1.0619)">0,000</div>
<div class="t rg" style="left:1161.00px;top:602.00px;font-size:10.0px;line-height:12px;font-weight:normal;font-style:normal;color:#000;transform:scaleX(1.0619)">0,000</div>
<div class="t rg" style="left:1224.00px;top:602.00px;font-size:10.0px;line-height:12px;font-weight:normal;font-style:normal;color:#000;transform:scaleX(1.0619)">0,000</div>
<div class="t rg" style="left:1350.20px;top:602.00px;font-size:10.0px;line-height:12px;font-weight:normal;font-style:normal;color:#000;transform:scaleX(1.0619)">0,000</div>
<svg style="left:621px;top:600px" width="7" height="7"><path d="M0 0H6.5L0 6.5Z" fill="#008000"/></svg>
<div class="t rg" style="left:146.50px;top:623.00px;font-size:10.0px;line-height:12px;font-weight:normal;font-style:normal;color:#000;transform:scaleX(0.8072)">OBJ</div>
<div class="t rg" style="left:623.10px;top:623.00px;font-size:10.0px;line-height:12px;font-weight:normal;font-style:normal;color:#000;transform:scaleX(1.0631)">0</div>
<div class="t rg" style="left:665.40px;top:623.00px;font-size:10.0px;line-height:12px;font-weight:normal;font-style:normal;color:#000;transform:scaleX(1.0739)">descripción medición</div>
<div class="t rg" style="left:1011.00px;top:623.00px;font-size:10.0px;line-height:12px;font-weight:normal;font-style:normal;color:#000;transform:scaleX(1.0450)">0</div>
<div class="t rg" style="left:1055.90px;top:623.00px;font-size:10.0px;line-height:12px;font-weight:normal;font-style:normal;color:#000;transform:scaleX(1.0450)">0</div>
<div class="t rg" style="left:1098.00px;top:623.00px;font-size:10.0px;line-height:12px;font-weight:normal;font-style:normal;color:#000;transform:scaleX(1.0619)">0,000</div>
<div class="t rg" style="left:1161.00px;top:623.00px;font-size:10.0px;line-height:12px;font-weight:normal;font-style:normal;color:#000;transform:scaleX(1.0619)">0,000</div>
<div class="t rg" style="left:1224.00px;top:623.00px;font-size:10.0px;line-height:12px;font-weight:normal;font-style:normal;color:#000;transform:scaleX(1.0619)">0,000</div>
<div class="t rg" style="left:1350.20px;top:623.00px;font-size:10.0px;line-height:12px;font-weight:normal;font-style:normal;color:#000;transform:scaleX(1.0619)">0,000</div>
<svg style="left:621px;top:621px" width="7" height="7"><path d="M0 0H6.5L0 6.5Z" fill="#008000"/></svg>
<div class="t rg" style="left:146.50px;top:642.00px;font-size:10.0px;line-height:12px;font-weight:normal;font-style:normal;color:#000;transform:scaleX(0.8072)">OBJ</div>
<div class="t rg" style="left:623.10px;top:642.00px;font-size:10.0px;line-height:12px;font-weight:normal;font-style:normal;color:#000;transform:scaleX(1.0631)">0</div>
<div class="t rg" style="left:665.40px;top:642.00px;font-size:10.0px;line-height:12px;font-weight:normal;font-style:normal;color:#000;transform:scaleX(1.0739)">descripción medición</div>
<div class="t rg" style="left:1011.00px;top:642.00px;font-size:10.0px;line-height:12px;font-weight:normal;font-style:normal;color:#000;transform:scaleX(1.0450)">0</div>
<div class="t rg" style="left:1055.90px;top:642.00px;font-size:10.0px;line-height:12px;font-weight:normal;font-style:normal;color:#000;transform:scaleX(1.0450)">0</div>
<div class="t rg" style="left:1098.00px;top:642.00px;font-size:10.0px;line-height:12px;font-weight:normal;font-style:normal;color:#000;transform:scaleX(1.0619)">0,000</div>
<div class="t rg" style="left:1161.00px;top:642.00px;font-size:10.0px;line-height:12px;font-weight:normal;font-style:normal;color:#000;transform:scaleX(1.0619)">0,000</div>
<div class="t rg" style="left:1224.00px;top:642.00px;font-size:10.0px;line-height:12px;font-weight:normal;font-style:normal;color:#000;transform:scaleX(1.0619)">0,000</div>
<div class="t rg" style="left:1350.20px;top:642.00px;font-size:10.0px;line-height:12px;font-weight:normal;font-style:normal;color:#000;transform:scaleX(1.0619)">0,000</div>
<svg style="left:621px;top:640px" width="7" height="7"><path d="M0 0H6.5L0 6.5Z" fill="#008000"/></svg>
<div class="t rg" style="left:277.40px;top:661.00px;font-size:10.0px;line-height:12px;font-weight:normal;font-style:normal;color:#000;transform:scaleX(1.0924)">Total medición objetivo</div>
<div class="t rg" style="left:1350.20px;top:661.00px;font-size:10.0px;line-height:12px;font-weight:normal;font-style:normal;color:#000;transform:scaleX(1.0619)">0,000</div>
<svg style="left:1254px;top:659px" width="7" height="7"><path d="M0 0H6.5L0 6.5Z" fill="#008000"/></svg>
<div class="t rg" style="left:146.50px;top:680.00px;font-size:10.0px;line-height:12px;font-weight:normal;font-style:normal;color:#000;transform:scaleX(0.7404)">EST</div>
<div class="t rg" style="left:623.10px;top:680.00px;font-size:10.0px;line-height:12px;font-weight:normal;font-style:normal;color:#000;transform:scaleX(1.0631)">0</div>
<div class="t rg" style="left:665.40px;top:680.00px;font-size:10.0px;line-height:12px;font-weight:normal;font-style:normal;color:#000;transform:scaleX(1.0739)">descripción medición</div>
<div class="t rg" style="left:1011.00px;top:680.00px;font-size:10.0px;line-height:12px;font-weight:normal;font-style:normal;color:#000;transform:scaleX(1.0450)">0</div>
<div class="t rg" style="left:1055.90px;top:680.00px;font-size:10.0px;line-height:12px;font-weight:normal;font-style:normal;color:#000;transform:scaleX(1.0450)">0</div>
<div class="t rg" style="left:1098.00px;top:680.00px;font-size:10.0px;line-height:12px;font-weight:normal;font-style:normal;color:#000;transform:scaleX(1.0619)">0,000</div>
<div class="t rg" style="left:1161.00px;top:680.00px;font-size:10.0px;line-height:12px;font-weight:normal;font-style:normal;color:#000;transform:scaleX(1.0619)">0,000</div>
<div class="t rg" style="left:1224.00px;top:680.00px;font-size:10.0px;line-height:12px;font-weight:normal;font-style:normal;color:#000;transform:scaleX(1.0619)">0,000</div>
<div class="t rg" style="left:1350.20px;top:680.00px;font-size:10.0px;line-height:12px;font-weight:normal;font-style:normal;color:#000;transform:scaleX(1.0619)">0,000</div>
<svg style="left:621px;top:678px" width="7" height="7"><path d="M0 0H6.5L0 6.5Z" fill="#008000"/></svg>
<div class="t rg" style="left:146.50px;top:699.00px;font-size:10.0px;line-height:12px;font-weight:normal;font-style:normal;color:#000;transform:scaleX(0.7404)">EST</div>
<div class="t rg" style="left:623.10px;top:699.00px;font-size:10.0px;line-height:12px;font-weight:normal;font-style:normal;color:#000;transform:scaleX(1.0631)">0</div>
<div class="t rg" style="left:665.40px;top:699.00px;font-size:10.0px;line-height:12px;font-weight:normal;font-style:normal;color:#000;transform:scaleX(1.0739)">descripción medición</div>
<div class="t rg" style="left:1011.00px;top:699.00px;font-size:10.0px;line-height:12px;font-weight:normal;font-style:normal;color:#000;transform:scaleX(1.0450)">0</div>
<div class="t rg" style="left:1055.90px;top:699.00px;font-size:10.0px;line-height:12px;font-weight:normal;font-style:normal;color:#000;transform:scaleX(1.0450)">0</div>
<div class="t rg" style="left:1098.00px;top:699.00px;font-size:10.0px;line-height:12px;font-weight:normal;font-style:normal;color:#000;transform:scaleX(1.0619)">0,000</div>
<div class="t rg" style="left:1161.00px;top:699.00px;font-size:10.0px;line-height:12px;font-weight:normal;font-style:normal;color:#000;transform:scaleX(1.0619)">0,000</div>
<div class="t rg" style="left:1224.00px;top:699.00px;font-size:10.0px;line-height:12px;font-weight:normal;font-style:normal;color:#000;transform:scaleX(1.0619)">0,000</div>
<div class="t rg" style="left:1350.20px;top:699.00px;font-size:10.0px;line-height:12px;font-weight:normal;font-style:normal;color:#000;transform:scaleX(1.0619)">0,000</div>
<svg style="left:621px;top:697px" width="7" height="7"><path d="M0 0H6.5L0 6.5Z" fill="#008000"/></svg>
<div class="t rg" style="left:277.40px;top:718.00px;font-size:10.0px;line-height:12px;font-weight:normal;font-style:normal;color:#000;transform:scaleX(1.0811)">Total medición estimada</div>
<div class="t rg" style="left:1350.20px;top:718.00px;font-size:10.0px;line-height:12px;font-weight:normal;font-style:normal;color:#000;transform:scaleX(1.0619)">0,000</div>
<div class="t rg" style="left:31.00px;top:737.00px;font-size:10.0px;line-height:12px;font-weight:normal;font-style:normal;color:#000;transform:scaleX(1.0742)">001.02.01</div>
<div class="t rg" style="left:146.30px;top:737.00px;font-size:10.0px;line-height:12px;font-weight:normal;font-style:normal;color:#000;transform:scaleX(0.9986)">OBJ-Naturaleza</div>
<div class="t rg" style="left:250.60px;top:737.00px;font-size:10.0px;line-height:12px;font-weight:normal;font-style:normal;color:#000;transform:scaleX(0.9640)">ud</div>
<div class="t rg" style="left:277.50px;top:737.00px;font-size:10.0px;line-height:12px;font-weight:normal;font-style:normal;color:#000;transform:scaleX(1.0733)">Descripción de partida de coste directo objetivo</div>
<div class="t rg" style="left:1476.00px;top:737.00px;font-size:10.0px;line-height:12px;font-weight:normal;font-style:normal;color:#000;transform:scaleX(1.0619)">0,000</div>
<div class="t rg" style="left:1551.20px;top:737.00px;font-size:10.0px;line-height:12px;font-weight:normal;font-style:normal;color:#000;transform:scaleX(1.0619)">0,000</div>
<div class="t rg" style="left:1629.20px;top:737.00px;font-size:10.0px;line-height:12px;font-weight:normal;font-style:normal;color:#000;transform:scaleX(1.0619)">0,000</div>
<div class="t rg" style="left:1709.00px;top:737.00px;font-size:10.0px;line-height:12px;font-weight:normal;font-style:normal;color:#000;transform:scaleX(1.0619)">0,000</div>
<div class="t rg" style="left:31.00px;top:756.00px;font-size:10.0px;line-height:12px;font-weight:normal;font-style:normal;color:#000;transform:scaleX(1.0742)">001.02.02</div>
<div class="t rg" style="left:146.30px;top:756.00px;font-size:10.0px;line-height:12px;font-weight:normal;font-style:normal;color:#000;transform:scaleX(0.9986)">OBJ-Naturaleza</div>
<div class="t rg" style="left:250.60px;top:756.00px;font-size:10.0px;line-height:12px;font-weight:normal;font-style:normal;color:#000;transform:scaleX(0.9640)">ud</div>
<div class="t rg" style="left:277.50px;top:756.00px;font-size:10.0px;line-height:12px;font-weight:normal;font-style:normal;color:#000;transform:scaleX(1.0733)">Descripción de partida de coste directo objetivo</div>
<div class="t rg" style="left:1476.00px;top:756.00px;font-size:10.0px;line-height:12px;font-weight:normal;font-style:normal;color:#000;transform:scaleX(1.0619)">0,000</div>
<div class="t rg" style="left:1551.20px;top:756.00px;font-size:10.0px;line-height:12px;font-weight:normal;font-style:normal;color:#000;transform:scaleX(1.0619)">0,000</div>
<div class="t rg" style="left:1629.20px;top:756.00px;font-size:10.0px;line-height:12px;font-weight:normal;font-style:normal;color:#000;transform:scaleX(1.0619)">0,000</div>
<div class="t rg" style="left:1709.00px;top:756.00px;font-size:10.0px;line-height:12px;font-weight:normal;font-style:normal;color:#000;transform:scaleX(1.0619)">0,000</div>
<div class="t rg" style="left:31.00px;top:794.00px;font-size:10.0px;line-height:12px;font-weight:normal;font-style:normal;color:#000;transform:scaleX(1.0742)">001.02.01</div>
<div class="t rg" style="left:146.30px;top:794.00px;font-size:10.0px;line-height:12px;font-weight:normal;font-style:normal;color:#000;transform:scaleX(0.9809)">EST-Naturaleza</div>
<div class="t rg" style="left:250.60px;top:794.00px;font-size:10.0px;line-height:12px;font-weight:normal;font-style:normal;color:#000;transform:scaleX(0.9640)">ud</div>
<div class="t rg" style="left:277.50px;top:794.00px;font-size:10.0px;line-height:12px;font-weight:normal;font-style:normal;color:#000;transform:scaleX(1.0701)">Descripción de partida de coste directo estimado</div>
<div class="t rg" style="left:1476.00px;top:794.00px;font-size:10.0px;line-height:12px;font-weight:normal;font-style:normal;color:#000;transform:scaleX(1.0619)">0,000</div>
<div class="t rg" style="left:1551.20px;top:794.00px;font-size:10.0px;line-height:12px;font-weight:normal;font-style:normal;color:#000;transform:scaleX(1.0619)">0,000</div>
<div class="t rg" style="left:1629.20px;top:794.00px;font-size:10.0px;line-height:12px;font-weight:normal;font-style:normal;color:#000;transform:scaleX(1.0619)">0,000</div>
<div class="t rg" style="left:1709.00px;top:794.00px;font-size:10.0px;line-height:12px;font-weight:normal;font-style:normal;color:#000;transform:scaleX(1.0619)">0,000</div>
<div class="t rg" style="left:277.30px;top:775.00px;font-size:10.0px;line-height:12px;font-weight:normal;font-style:normal;color:#000;transform:scaleX(1.0904)">Total coste directo objetivo</div>
<div class="t rg" style="left:1709.00px;top:775.00px;font-size:10.0px;line-height:12px;font-weight:normal;font-style:normal;color:#000;transform:scaleX(1.0619)">0,000</div>
<div class="t" style="left:81.78px;top:42.00px;font-size:12.6px;line-height:15px;font-weight:normal;font-style:normal;color:#000;transform:scaleX(1.0000)">A</div>
<div class="t" style="left:191.31px;top:42.00px;font-size:12.6px;line-height:15px;font-weight:normal;font-style:normal;color:#000;transform:scaleX(1.0000)">B</div>
<div class="t" style="left:256.46px;top:42.00px;font-size:12.6px;line-height:15px;font-weight:normal;font-style:normal;color:#000;transform:scaleX(1.0000)">C</div>
<div class="t" style="left:442.96px;top:42.00px;font-size:12.6px;line-height:15px;font-weight:normal;font-style:normal;color:#000;transform:scaleX(1.0000)">D</div>
<div class="t" style="left:637.31px;top:42.00px;font-size:12.6px;line-height:15px;font-weight:normal;font-style:normal;color:#000;transform:scaleX(1.0000)">E</div>
<div class="t" style="left:817.16px;top:42.00px;font-size:12.6px;line-height:15px;font-weight:normal;font-style:normal;color:#000;transform:scaleX(1.0000)">F</div>
<div class="t" style="left:994.59px;top:42.00px;font-size:12.6px;line-height:15px;font-weight:normal;font-style:normal;color:#000;transform:scaleX(1.0000)">G</div>
<div class="t" style="left:1037.46px;top:42.00px;font-size:12.6px;line-height:15px;font-weight:normal;font-style:normal;color:#000;transform:scaleX(1.0000)">H</div>
<div class="t" style="left:1094.24px;top:42.00px;font-size:12.6px;line-height:15px;font-weight:normal;font-style:normal;color:#000;transform:scaleX(1.0000)">I</div>
<div class="t" style="left:1155.85px;top:42.00px;font-size:12.6px;line-height:15px;font-weight:normal;font-style:normal;color:#000;transform:scaleX(1.0000)">J</div>
<div class="t" style="left:1217.81px;top:42.00px;font-size:12.6px;line-height:15px;font-weight:normal;font-style:normal;color:#000;transform:scaleX(1.0000)">K</div>
<div class="t" style="left:1313.00px;top:42.00px;font-size:12.6px;line-height:15px;font-weight:normal;font-style:normal;color:#000;transform:scaleX(1.0000)">L</div>
<div class="t" style="left:1437.24px;top:42.00px;font-size:12.6px;line-height:15px;font-weight:normal;font-style:normal;color:#000;transform:scaleX(1.0000)">M</div>
<div class="t" style="left:1538.46px;top:42.00px;font-size:12.6px;line-height:15px;font-weight:normal;font-style:normal;color:#217346;transform:scaleX(1.0000)">N</div>
<div class="t" style="left:1614.59px;top:42.00px;font-size:12.6px;line-height:15px;font-weight:normal;font-style:normal;color:#000;transform:scaleX(1.0000)">O</div>
<div class="t" style="left:1694.31px;top:42.00px;font-size:12.6px;line-height:15px;font-weight:normal;font-style:normal;color:#000;transform:scaleX(1.0000)">P</div>
<div class="t" style="left:12.00px;top:62.00px;font-size:12.6px;line-height:15px;font-weight:normal;font-style:normal;color:#000;transform:scaleX(1.0000)">1</div>
<div class="t" style="left:12.00px;top:86.00px;font-size:12.6px;line-height:15px;font-weight:normal;font-style:normal;color:#000;transform:scaleX(1.0000)">2</div>
<div class="t" style="left:12.00px;top:106.00px;font-size:12.6px;line-height:15px;font-weight:normal;font-style:normal;color:#000;transform:scaleX(1.0000)">3</div>
<div class="t" style="left:12.00px;top:145.00px;font-size:12.6px;line-height:15px;font-weight:normal;font-style:normal;color:#000;transform:scaleX(1.0000)">4</div>
<div class="t" style="left:12.00px;top:164.00px;font-size:12.6px;line-height:15px;font-weight:normal;font-style:normal;color:#000;transform:scaleX(1.0000)">5</div>
<div class="t" style="left:12.00px;top:202.00px;font-size:12.6px;line-height:15px;font-weight:normal;font-style:normal;color:#000;transform:scaleX(1.0000)">6</div>
<div class="t" style="left:12.00px;top:241.00px;font-size:12.6px;line-height:15px;font-weight:normal;font-style:normal;color:#000;transform:scaleX(1.0000)">7</div>
<div class="t" style="left:12.00px;top:260.00px;font-size:12.6px;line-height:15px;font-weight:normal;font-style:normal;color:#000;transform:scaleX(1.0000)">8</div>
<div class="t" style="left:12.00px;top:279.00px;font-size:12.6px;line-height:15px;font-weight:normal;font-style:normal;color:#000;transform:scaleX(1.0000)">9</div>
<div class="t" style="left:8.51px;top:298.00px;font-size:12.6px;line-height:15px;font-weight:normal;font-style:normal;color:#000;transform:scaleX(1.0000)">10</div>
<div class="t" style="left:8.95px;top:317.00px;font-size:12.6px;line-height:15px;font-weight:normal;font-style:normal;color:#000;transform:scaleX(1.0000)">11</div>
<div class="t" style="left:8.51px;top:336.00px;font-size:12.6px;line-height:15px;font-weight:normal;font-style:normal;color:#000;transform:scaleX(1.0000)">12</div>
<div class="t" style="left:8.51px;top:355.00px;font-size:12.6px;line-height:15px;font-weight:normal;font-style:normal;color:#000;transform:scaleX(1.0000)">13</div>
<div class="t" style="left:8.51px;top:374.00px;font-size:12.6px;line-height:15px;font-weight:normal;font-style:normal;color:#000;transform:scaleX(1.0000)">14</div>
<div class="t" style="left:8.51px;top:393.00px;font-size:12.6px;line-height:15px;font-weight:normal;font-style:normal;color:#000;transform:scaleX(1.0000)">15</div>
<div class="t" style="left:8.51px;top:412.00px;font-size:12.6px;line-height:15px;font-weight:normal;font-style:normal;color:#000;transform:scaleX(1.0000)">16</div>
<div class="t" style="left:8.51px;top:431.00px;font-size:12.6px;line-height:15px;font-weight:normal;font-style:normal;color:#000;transform:scaleX(1.0000)">17</div>
<div class="t" style="left:8.51px;top:450.00px;font-size:12.6px;line-height:15px;font-weight:normal;font-style:normal;color:#000;transform:scaleX(1.0000)">18</div>
<div class="t" style="left:8.51px;top:469.00px;font-size:12.6px;line-height:15px;font-weight:normal;font-style:normal;color:#000;transform:scaleX(1.0000)">19</div>
<div class="t" style="left:8.51px;top:488.00px;font-size:12.6px;line-height:15px;font-weight:normal;font-style:normal;color:#000;transform:scaleX(1.0000)">20</div>
<div class="t" style="left:8.51px;top:507.00px;font-size:12.6px;line-height:15px;font-weight:normal;font-style:normal;color:#000;transform:scaleX(1.0000)">21</div>
<div class="t" style="left:8.51px;top:545.00px;font-size:12.6px;line-height:15px;font-weight:normal;font-style:normal;color:#000;transform:scaleX(1.0000)">22</div>
<div class="t" style="left:8.51px;top:584.00px;font-size:12.6px;line-height:15px;font-weight:normal;font-style:normal;color:#000;transform:scaleX(1.0000)">23</div>
<div class="t" style="left:8.51px;top:605.00px;font-size:12.6px;line-height:15px;font-weight:normal;font-style:normal;color:#000;transform:scaleX(1.0000)">24</div>
<div class="t" style="left:8.51px;top:624.00px;font-size:12.6px;line-height:15px;font-weight:normal;font-style:normal;color:#000;transform:scaleX(1.0000)">25</div>
<div class="t" style="left:8.51px;top:643.00px;font-size:12.6px;line-height:15px;font-weight:normal;font-style:normal;color:#000;transform:scaleX(1.0000)">26</div>
<div class="t" style="left:8.51px;top:662.00px;font-size:12.6px;line-height:15px;font-weight:normal;font-style:normal;color:#000;transform:scaleX(1.0000)">27</div>
<div class="t" style="left:8.51px;top:681.00px;font-size:12.6px;line-height:15px;font-weight:normal;font-style:normal;color:#000;transform:scaleX(1.0000)">28</div>
<div class="t" style="left:8.51px;top:700.00px;font-size:12.6px;line-height:15px;font-weight:normal;font-style:normal;color:#000;transform:scaleX(1.0000)">29</div>
<div class="t" style="left:8.51px;top:719.00px;font-size:12.6px;line-height:15px;font-weight:normal;font-style:normal;color:#000;transform:scaleX(1.0000)">30</div>
<div class="t" style="left:8.51px;top:738.00px;font-size:12.6px;line-height:15px;font-weight:normal;font-style:normal;color:#000;transform:scaleX(1.0000)">31</div>
<div class="t" style="left:8.51px;top:757.00px;font-size:12.6px;line-height:15px;font-weight:normal;font-style:normal;color:#000;transform:scaleX(1.0000)">32</div>
<div class="t" style="left:8.51px;top:776.00px;font-size:12.6px;line-height:15px;font-weight:normal;font-style:normal;color:#000;transform:scaleX(1.0000)">33</div>
<div class="t" style="left:8.51px;top:795.00px;font-size:12.6px;line-height:15px;font-weight:normal;font-style:normal;color:#000;transform:scaleX(1.0000)">34</div>
<div class="t" style="left:224.60px;top:10.00px;font-size:12.6px;line-height:15px;font-weight:normal;font-style:normal;color:#000;transform:scaleX(0.8580)">1</div>
<div class="t" style="left:-2.00px;top:10.00px;font-size:12.6px;line-height:15px;font-weight:normal;font-style:normal;color:#000;transform:scaleX(0.9295)">3</div>
</body></html>
